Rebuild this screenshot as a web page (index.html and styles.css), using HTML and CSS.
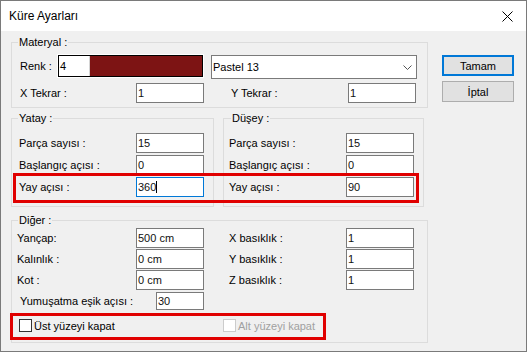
FILE: index.html
```html
<!DOCTYPE html>
<html lang="tr">
<head>
  <meta charset="UTF-8" />
  <title>Küre Ayarları</title>
  <link rel="stylesheet" href="styles.css">
</head>
<body>
  <div class="window">
    <div class="titlebar">
      <span class="title">Küre Ayarları</span>
      <svg class="close" width="11" height="11" viewBox="0 0 11 11">
        <path d="M0.5 0.5 L10.5 10.5 M10.5 0.5 L0.5 10.5" stroke="#000" stroke-width="1" fill="none"/>
      </svg>
    </div>

    <div class="content">
      <div class="groups">
        <fieldset class="group materyal">
          <legend>Materyal :</legend>
          <div class="renk-row">
            <span class="renk-label">Renk :</span>
            <div class="swatch">
              <div class="swatch-inner">
                <span class="swatch-num">4</span>
                <span class="swatch-color"></span>
              </div>
            </div>
            <div class="combo">
              <span>Pastel 13</span>
              <svg width="9" height="5" viewBox="0 0 9 5">
                <path d="M0.5 0.5 L4.5 4.5 L8.5 0.5" stroke="#555" stroke-width="1" fill="none"/>
              </svg>
            </div>
          </div>
          <div class="tekrar-row">
            <span>X Tekrar :</span>
            <div class="field">1</div>
            <span></span>
            <span>Y Tekrar :</span>
            <div class="field">1</div>
          </div>
        </fieldset>

        <div class="pair">
          <fieldset class="group yatay">
            <legend>Yatay :</legend>
            <div class="axis-grid">
              <span>Parça sayısı :</span>
              <div class="field">15</div>
              <span>Başlangıç açısı :</span>
              <div class="field">0</div>
              <span>Yay açısı :</span>
              <div class="field focus">360<span class="caret"></span></div>
            </div>
          </fieldset>

          <fieldset class="group dusey">
            <legend>Düşey :</legend>
            <div class="axis-grid">
              <span>Parça sayısı :</span>
              <div class="field">15</div>
              <span>Başlangıç açısı :</span>
              <div class="field">0</div>
              <span>Yay açısı :</span>
              <div class="field">90</div>
            </div>
          </fieldset>
        </div>

        <fieldset class="group diger">
          <legend>Diğer :</legend>
          <div class="diger-grid">
            <span>Yançap:</span>
            <div class="field">500 cm</div>
            <span></span>
            <span>X basıklık :</span>
            <div class="field">1</div>

            <span>Kalınlık :</span>
            <div class="field">0 cm</div>
            <span></span>
            <span>Y basıklık :</span>
            <div class="field">1</div>

            <span>Kot :</span>
            <div class="field">0 cm</div>
            <span></span>
            <span>Z basıklık :</span>
            <div class="field">1</div>
          </div>
          <div class="yumusatma">
            <span class="yumusatma-label">Yumuşatma eşik açısı :</span>
            <div class="field small">30</div>
          </div>
          <div class="checks">
            <label class="check"><span class="box"></span>Üst yüzeyi kapat</label>
            <label class="check disabled"><span class="box"></span>Alt yüzeyi kapat</label>
          </div>
        </fieldset>

        <!-- highlight frames drawn over the dialog -->
        <div class="mark mark-yay"></div>
        <div class="mark mark-yuzey"></div>
      </div>

      <div class="buttons">
        <button class="btn default">Tamam</button>
        <button class="btn">İptal</button>
      </div>
    </div>
  </div>
</body>
</html>
```

FILE: styles.css
```css
* {
  box-sizing: border-box;
}

body {
  margin: 0;
  font-family: "Liberation Sans", Arial, sans-serif;
  font-size: 11px;
  color: #000;
  background: #fff;
}

.window {
  width: 527px;
  height: 352px;
  border: 1px solid #7a7a7a;
  background: #f0f0f0;
  display: flex;
  flex-direction: column;
}

.titlebar {
  flex: none;
  height: 30px;
  background: #fff;
  display: flex;
  align-items: center;
  justify-content: space-between;
  padding: 0 13px 0 8px;
}

.title {
  font-size: 12px;
}

.close {
  display: block;
}

.content {
  display: flex;
  gap: 14px;
  padding: 5px 0 0 10px;
}

.groups {
  position: relative;
  width: 417px;
}

.group {
  margin: 0;
  min-width: 0;
  border: 1px solid #dcdcdc;
}

.group legend {
  padding: 0 1px;
  line-height: 13px;
}

.field {
  height: 20px;
  background: #fff;
  border: 1px solid #7a7a7a;
  padding: 0 1px;
  line-height: 18px;
  white-space: nowrap;
  color: #111;
}

.field.focus {
  border-color: #0078d7;
}

.field.small {
  width: 48px;
  height: 18px;
  line-height: 16px;
}

.caret {
  display: inline-block;
  width: 1px;
  height: 12px;
  background: #000;
  vertical-align: -2px;
}

/* Materyal */
.materyal {
  padding: 5px 8px 4px 8px;
}

.materyal legend {
  margin-left: -2px;
}

.renk-row {
  display: flex;
  align-items: flex-start;
  height: 24px;
}

.renk-label {
  width: 37px;
  line-height: 24px;
}

.swatch {
  width: 147px;
  height: 24px;
  border: 1px solid #fff;
}

.swatch-inner {
  display: flex;
  height: 100%;
  border: 1px solid #000;
}

.swatch-num {
  width: 31px;
  background: #fff;
  padding-left: 1px;
  line-height: 20px;
  border-right: 1px solid #d4d4d4;
}

.swatch-color {
  flex: 1;
  background: #7d1414;
}

.combo {
  width: 206px;
  height: 24px;
  margin: 1px 0 0 7px;
  background: #fff;
  border: 1px solid #7a7a7a;
  display: flex;
  align-items: center;
  justify-content: space-between;
  padding: 0 4px 0 1px;
}

.combo svg {
  display: block;
}

.tekrar-row {
  display: grid;
  grid-template-columns: 116px 68px 27px 117px 68px;
  align-items: center;
  height: 20px;
  margin-top: 5px;
}

/* Yatay / Düşey */
.pair {
  display: flex;
  gap: 9px;
  margin-top: 4px;
}

.yatay {
  width: 203px;
  padding: 8px 0 9px 7px;
}

.yatay legend {
  margin-left: -1px;
}

.dusey {
  width: 201px;
  padding: 8px 0 9px 5px;
}

.dusey legend {
  margin-left: 2px;
}

.axis-grid {
  display: grid;
  grid-template-columns: 117px 68px;
  grid-auto-rows: 20px;
  row-gap: 2px;
  align-items: center;
}

/* Diğer */
.diger {
  width: 417px;
  margin-top: 7px;
  padding: 1px 0 10px 5px;
}

.diger legend {
  margin-left: 1px;
}

.diger-grid {
  display: grid;
  grid-template-columns: 119px 68px 25px 117px 68px;
  grid-auto-rows: 20px;
  row-gap: 1px;
  align-items: center;
}

.yumusatma {
  display: flex;
  align-items: center;
  height: 18px;
  margin-top: 2px;
}

.yumusatma-label {
  width: 136px;
  margin-left: 3px;
}

.checks {
  display: flex;
  align-items: center;
  height: 13px;
  margin-top: 9px;
  padding-left: 2px;
}

.check {
  display: flex;
  align-items: center;
  gap: 2px;
  width: 210px;
}

.check .box {
  width: 13px;
  height: 13px;
  background: #fff;
  border: 1px solid #333;
}

.check.disabled {
  color: #a0a0a0;
}

.check.disabled .box {
  border-color: #ccc;
}

.mark {
  position: absolute;
  border: 3px solid #e00000;
}

.mark-yay {
  left: 2px;
  top: 137px;
  width: 406px;
  height: 30px;
}

.mark-yuzey {
  left: -1px;
  top: 277px;
  width: 316px;
  height: 27px;
}

/* Buttons */
.buttons {
  display: flex;
  flex-direction: column;
  gap: 5px;
  padding-top: 19px;
}

.btn {
  width: 72px;
  height: 21px;
  padding: 0;
  background: #e1e1e1;
  border: 1px solid #adadad;
  font-family: inherit;
  font-size: 11px;
  color: #000;
}

.btn.default {
  border: 2px solid #0078d7;
}
```
